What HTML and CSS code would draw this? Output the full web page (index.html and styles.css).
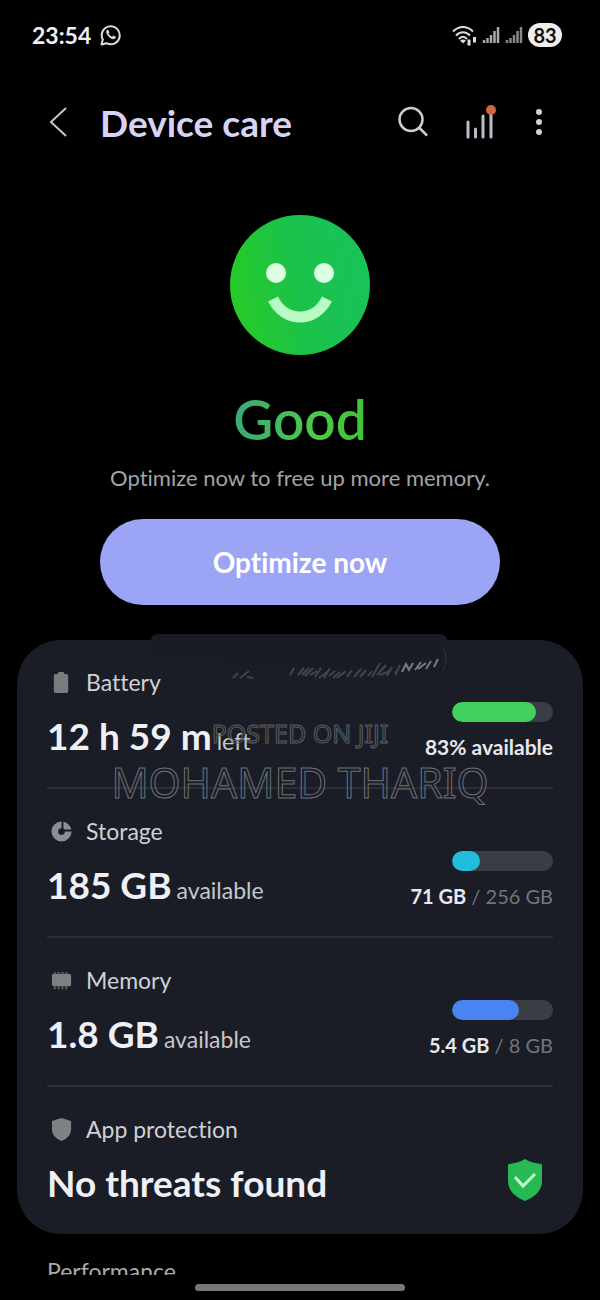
FILE: index.html
```
<!DOCTYPE html>
<html lang="en">

<head>
    <meta charset="UTF-8">
    <meta name="viewport" content="width=device-width, initial-scale=1.0">
    <title>Device care</title>
    <link rel="stylesheet" href="styles.css">
</head>

<body>
    <!-- Status bar -->
    <div class="status-bar">
        <div class="status-left">
            <span class="clock">23:54</span>
            <svg class="icon-chat" viewBox="0 0 22 22" aria-hidden="true">
                <path d="M1.5 20.5l1.3-5A9 9 0 1 1 6.500 19.200z" fill="none" stroke="#ddd" stroke-width="2" stroke-linejoin="round" />
                <path d="M6.500 6.500c.8-1 1.700-.8 2.100 0l.8 1.700-.9 1.300c.8 1.600 2 2.700 3.600 3.300l1.300-1.200 1.900 1c.7.5.4 1.500-.5 2.200-1.500 1.100-4.300-.3-6-2-1.800-1.700-3.300-4.700-2.300-6.300z" fill="#ddd" />
            </svg>
        </div>
        <div class="status-right">
            <svg class="icon-wifi" viewBox="0 0 25 21" aria-hidden="true">
                <g fill="none" stroke="#ddd" stroke-width="2">
                    <path d="M1 6.500c6-6 14-6 20 0" />
                    <path d="M4 10.500c4-4.500 10-4.500 14 0" />
                    <path d="M7 14c2.500-3 5.500-3 8 0" />
                </g>
                <path d="M8 15.500c2-1.500 4-1.500 6 0l-3 3z" fill="#ddd" />
                <path d="M17 14.500v6M22.500 12v5.500" stroke="#ddd" stroke-width="3" fill="none" />
            </svg>
            <svg class="icon-signal" viewBox="0 0 18 18" aria-hidden="true">
                <path d="M2 17v-3M5.500 17v-5M9 17V9M12.500 17V5M16 17V1" stroke="#aaa" stroke-width="2.500" />
            </svg>
            <svg class="icon-signal" viewBox="0 0 18 18" aria-hidden="true">
                <path d="M2 17v-3M5.500 17v-5M9 17V9M12.500 17V5M16 17V1" stroke="#888" stroke-width="2.500" />
            </svg>
            <span class="battery-pill">83</span>
        </div>
    </div>

    <!-- App bar -->
    <header class="app-bar">
        <button class="icon-btn back-btn" aria-label="Back">
            <svg width="20" height="34" viewBox="0 0 20 34"><path d="M18 3L3 17l15 14" fill="none" stroke="#c4c4cc" stroke-width="2" /></svg>
        </button>
        <h1 class="title">Device care</h1>
        <button class="icon-btn" aria-label="Search">
            <svg width="32" height="32" viewBox="0 0 32 32"><g fill="none" stroke="#cdcbd8" stroke-width="2.500"><circle cx="14" cy="13.500" r="11.500" /><path d="M22 21.500l8 8" /></g></svg>
        </button>
        <button class="icon-btn" aria-label="Usage">
            <svg width="32" height="36" viewBox="0 0 32 36">
                <path d="M3 18v15M10.500 25v8M18 12v21M26 8v25" stroke="#bdbbc9" stroke-width="3" stroke-linecap="round" />
                <circle cx="26" cy="6" r="5" fill="#d0683c" />
            </svg>
        </button>
        <button class="icon-btn more-btn" aria-label="More options">
            <svg width="8" height="28" viewBox="0 0 8 28" fill="#d2d0dc"><circle cx="4" cy="4" r="3" /><circle cx="4" cy="14" r="3" /><circle cx="4" cy="24" r="3" /></svg>
        </button>
    </header>

    <!-- Overall state -->
    <section class="summary">
        <svg class="face" viewBox="0 0 140 140" role="img" aria-label="Smiling face">
            <defs>
                <linearGradient id="faceFill" x1="0" y1="0.600" x2="1" y2="0.400">
                    <stop offset="0" stop-color="#27cb27" />
                    <stop offset="0.500" stop-color="#1bc14b" />
                    <stop offset="1" stop-color="#17c45a" />
                </linearGradient>
            </defs>
            <circle cx="70" cy="70" r="70" fill="url(#faceFill)" />
            <circle cx="46" cy="58" r="10" fill="#dcffe2" />
            <circle cx="94" cy="58" r="10" fill="#dcffe2" />
            <path d="M43 84C55 108 85 108 97 84" fill="none" stroke="#b8fbc4" stroke-width="11" />
        </svg>
        <h2 class="state">Good</h2>
        <p class="hint">Optimize now to free up more memory.</p>
        <button class="optimize-btn">Optimize now</button>
    </section>

    <!-- Details card -->
    <main class="card">
        <!-- fading toast -->
        <svg class="toast-trace" viewBox="0 0 300 54" aria-hidden="true">
            <path d="M2 24V6q0-6 8-6h280q8 0 8 8v22q0 8-8 12" fill="#191c22" />
            <g fill="none" stroke="#41454c">
                <path d="M84 44l5-5m2 5l9-7m-2 6l6 1M141 41l4-7m4 7l6-7m-2 7l7-7m-4 8l8-8m-3 7l7-4m-2 6l6-9m-2 10l8-6m-3 6l6-10m-1 8l6-5m-2 7l7-6m-3 6l9-7m1 6l5-7m2 7l7-8m-1 8l6-7m2 6l4-5" stroke-width="2" />
                <path d="M223 43l8-14m-3 12l9-10m-6 10l10-4m-3 5l5-9m3 8l5-10" stroke-width="2" />
                <path d="M253 38l4-8 3 6 4-7m2 7l6-8m-3 7l8-6m0 6l5-8m3 6l4-8" stroke="#777a80" stroke-width="2" />
            </g>
            <path d="M294 14q6 11 0 22" fill="none" stroke="#31353b" />
        </svg>

        <section class="row">
            <div class="info">
                <h3 class="label">
                    <svg class="label-icon" viewBox="0 0 24 24" aria-hidden="true"><path d="M4 5q0-2 2-2h2l1-2h5l1 2h2q2 0 2 2v16q0 2-2 2H6q-2 0-2-2z" fill="#797c7d" /></svg>
                    Battery
                </h3>
                <p class="value">12 h 59 m <small>left</small></p>
            </div>
            <div class="usage">
                <div class="bar"><div class="fill fill-battery" style="width: 83%"></div></div>
                <p class="caption caption-main">83% available</p>
            </div>
        </section>

        <section class="row">
            <div class="info">
                <h3 class="label">
                    <svg class="label-icon" viewBox="0 0 24 24" aria-hidden="true"><circle cx="12" cy="12" r="7" fill="none" stroke="#8b8e92" stroke-width="7" /><path d="M13 1v10h10" fill="none" stroke="#1a1d25" stroke-width="2" /></svg>
                    Storage
                </h3>
                <p class="value">185 GB <small>available</small></p>
            </div>
            <div class="usage">
                <div class="bar"><div class="fill fill-storage" style="width: 28%"></div></div>
                <p class="caption"><b>71 GB</b> / 256 GB</p>
            </div>
        </section>

        <section class="row">
            <div class="info">
                <h3 class="label">
                    <svg class="label-icon" viewBox="0 0 24 24" aria-hidden="true"><rect x="2" y="5" width="20" height="13" rx="2" fill="#7d8081" /><path d="M5 3v2m4-2v2m4-2v2m4-2v2M5 18v3m4-3v3m4-3v3m4-3v3" stroke="#5d6063" stroke-width="2" /></svg>
                    Memory
                </h3>
                <p class="value">1.8 GB <small>available</small></p>
            </div>
            <div class="usage">
                <div class="bar"><div class="fill fill-memory" style="width: 66%"></div></div>
                <p class="caption"><b>5.4 GB</b> / 8 GB</p>
            </div>
        </section>

        <section class="row">
            <div class="info">
                <h3 class="label">
                    <svg class="label-icon" viewBox="0 0 24 24" aria-hidden="true"><path d="M12 0l10 3v9q0 8-10 12Q2 20 2 12V3z" fill="#7f8284" /></svg>
                    App protection
                </h3>
                <p class="value">No threats found</p>
            </div>
            <svg class="shield" viewBox="0 0 36 42" role="img" aria-label="Protected">
                <path d="M18 0q6 4 16 5 1 0 1 2v15q0 13-17 20Q1 35 1 22V7q0-2 1-2 10-1 16-5z" fill="#27b954" />
                <path d="M8 18l8 9L28 15" fill="none" stroke="#c0ffc8" stroke-width="3" />
            </svg>
        </section>

        <div class="watermark">
            <span class="watermark-site">POSTED ON JIJI</span>
            <span class="watermark-name">MOHAMED THARIQ</span>
        </div>
    </main>

    <section class="performance">
        <h3>Performance</h3>
    </section>

    <div class="gesture-bar"></div>
</body>

</html>
```
FILE: styles.css
```
* {
    margin: 0;
    padding: 0;
    box-sizing: border-box;
}

body {
    background-color: #000;
    color: #eef0f6;
    font-family: 'Lato', sans-serif;
    font-variant-ligatures: none;
    min-height: 100vh;
    display: flex;
    flex-direction: column;
}

button {
    font-family: inherit;
    font-variant-ligatures: none;
    border: none;
    cursor: pointer;
}

.status-bar {
    display: flex;
    justify-content: space-between;
    align-items: center;
    height: 70px;
    padding: 0 38px 0 32px;
}

.status-left,
.status-right {
    display: flex;
    align-items: center;
    gap: 5px;
}

.status-left {
    gap: 9px;
}

.clock {
    font-size: 23px;
    font-weight: bold;
}

.icon-chat {
    width: 22px;
    height: 22px;
}

.icon-wifi {
    width: 25px;
    height: 21px;
}

.icon-signal {
    width: 18px;
    height: 18px;
}

.battery-pill {
    width: 34px;
    height: 24px;
    border-radius: 12px;
    background-color: #eee;
    color: #111;
    font-size: 20px;
    line-height: 24px;
    font-weight: bold;
    text-align: center;
}

.app-bar {
    display: flex;
    align-items: center;
    height: 104px;
    padding: 0 57px 0 48px;
    gap: 36px;
}

.icon-btn {
    background: none;
    display: flex;
}

.back-btn {
    margin-right: -4px;
}

.more-btn {
    margin-left: 2px;
}

.title {
    flex: 1;
    color: #d6d3f5;
    font-size: 37px;
    font-weight: bold;
    white-space: nowrap;
}

.summary {
    display: flex;
    flex-direction: column;
    align-items: center;
    padding: 41px 100px 35px;
}

.face {
    width: 140px;
    height: 140px;
}

.state {
    margin-top: 34px;
    font-size: 55px;
    line-height: 60px;
    font-weight: 600;
    background-image: linear-gradient(90deg, #3aa878, #4cc94a 60%, #3fc436);
    background-clip: text;
    -webkit-background-clip: text;
    color: transparent;
}

.hint {
    margin-top: 14px;
    color: #a3a3a7;
    font-size: 22px;
    line-height: 30px;
    white-space: nowrap;
}

.optimize-btn {
    width: 100%;
    height: 86px;
    margin-top: 26px;
    border-radius: 43px;
    background-color: #9ba4f5;
    color: #fff;
    font-size: 28px;
    font-weight: bold;
}

.card {
    position: relative;
    margin: 0 17px;
    padding: 0 30px;
    border-radius: 44px;
    background-color: #1a1d25;
}

.toast-trace {
    position: absolute;
    top: -6px;
    left: 132px;
    width: 300px;
    height: 54px;
}

.row {
    position: relative;
    display: flex;
    justify-content: space-between;
    align-items: flex-start;
    height: 149px;
    padding-top: 27px;
    border-bottom: 2px solid #2b2e36;
}

.row:last-of-type {
    height: 147px;
    border-bottom: none;
}

.label {
    display: flex;
    align-items: center;
    gap: 13px;
    padding-left: 3px;
    color: #cfd1d7;
    font-size: 23px;
    line-height: 30px;
    font-weight: normal;
}

.label-icon {
    width: 23px;
    height: 23px;
}

.value {
    margin-top: 14px;
    font-size: 37px;
    line-height: 50px;
    font-weight: bold;
    white-space: nowrap;
}

.value small {
    margin-left: -4px;
    color: #c5c7cd;
    font-size: 23px;
    line-height: 1;
    font-weight: normal;
}

.usage {
    display: flex;
    flex-direction: column;
    align-items: flex-end;
    gap: 11px;
    margin-top: 35px;
}

.bar {
    width: 101px;
    height: 20px;
    border-radius: 10px;
    background-color: #3b3d45;
    overflow: hidden;
}

.fill {
    height: 100%;
    border-radius: 10px;
}

.fill-battery {
    background-color: #42d15c;
}

.fill-storage {
    background-color: #20bedb;
}

.fill-memory {
    background-color: #4a83f2;
}

.caption {
    color: #72757d;
    font-size: 20px;
    line-height: 28px;
}

.caption b,
.caption-main {
    color: #e6e8ee;
    font-weight: bold;
}

.caption-main {
    font-size: 21px;
}

.shield {
    width: 36px;
    height: 42px;
    margin: 45px 10px 0 0;
}

/* Seller stamp laid over the card */
.watermark {
    position: absolute;
    top: 74px;
    left: 0;
    right: 0;
    display: flex;
    flex-direction: column;
    align-items: center;
    font-family: 'Noto Sans', sans-serif;
    color: transparent;
    white-space: nowrap;
    pointer-events: none;
}

.watermark-site {
    font-size: 25px;
    line-height: 38px;
    -webkit-text-stroke: 1px #5a5e65;
}

.watermark-name {
    font-size: 41px;
    line-height: 60px;
    -webkit-text-stroke: 1px #6c7077;
}

.performance {
    height: 41px;
    padding: 22px 47px 0;
    overflow: hidden;
}

.performance h3 {
    color: #aaa;
    font-size: 23px;
    line-height: 30px;
    font-weight: normal;
}

.gesture-bar {
    width: 35%;
    height: 7px;
    margin: 9px auto;
    border-radius: 4px;
    background-color: #777;
}
```
